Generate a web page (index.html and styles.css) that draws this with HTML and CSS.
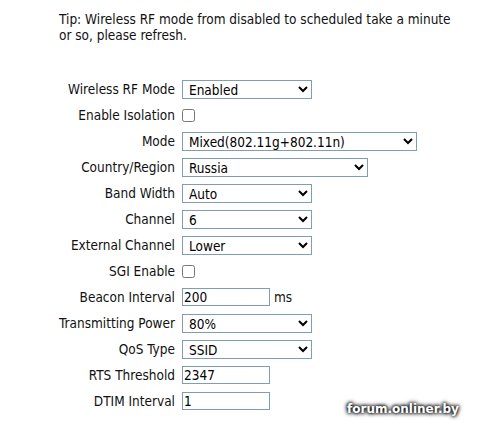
FILE: index.html
```html
<!DOCTYPE html>
<html lang="en">
<head>
    <meta charset="UTF-8">
    <title>Wireless Advanced</title>
    <link rel="stylesheet" href="styles.css">
</head>
<body>
    <p class="tip">Tip: Wireless RF mode from disabled to scheduled take a minute or so, please refresh.</p>

    <form class="settings">
        <label class="lbl">Wireless RF Mode</label>
        <div><select class="sel-sm"><option>Enabled</option><option>Disabled</option><option>Scheduled</option></select></div>

        <label class="lbl">Enable Isolation</label>
        <div><input type="checkbox" class="chk"></div>

        <label class="lbl">Mode</label>
        <div><select class="sel-lg"><option>Mixed(802.11g+802.11n)</option></select></div>

        <label class="lbl">Country/Region</label>
        <div><select class="sel-md"><option>Russia</option></select></div>

        <label class="lbl">Band Width</label>
        <div><select class="sel-sm"><option>Auto</option></select></div>

        <label class="lbl">Channel</label>
        <div><select class="sel-sm"><option>6</option></select></div>

        <label class="lbl">External Channel</label>
        <div><select class="sel-sm"><option>Lower</option></select></div>

        <label class="lbl">SGI Enable</label>
        <div><input type="checkbox" class="chk"></div>

        <label class="lbl">Beacon Interval</label>
        <div><input type="text" class="txt" value="200"> <span class="unit">ms</span></div>

        <label class="lbl">Transmitting Power</label>
        <div><select class="sel-sm"><option>80%</option></select></div>

        <label class="lbl">QoS Type</label>
        <div><select class="sel-sm"><option>SSID</option></select></div>

        <label class="lbl">RTS Threshold</label>
        <div><input type="text" class="txt" value="2347"></div>

        <label class="lbl">DTIM Interval</label>
        <div><input type="text" class="txt" value="1"></div>
    </form>

    <div class="watermark">forum.onliner.by</div>
</body>
</html>
```

FILE: styles.css
```css
body {
    margin: 0;
    background: #fff;
    color: #111;
    font-family: "DejaVu Sans Condensed", "DejaVu Sans", sans-serif;
    font-size: 13.5px;
    position: relative;
    height: 434px;
    overflow: hidden;
}
.tip {
    margin: 0;
    padding: 11px 0 0 59px;
    width: 396px;
    line-height: 16px;
}
.settings {
    display: grid;
    grid-template-columns: 117px auto;
    grid-auto-rows: 26px;
    column-gap: 7px;
    margin-top: 33px;
    padding-left: 58px;
    align-items: center;
}
.lbl {
    text-align: right;
    white-space: nowrap;
}
.settings > div {
    display: flex;
    align-items: center;
}
select, .txt {
    font-family: inherit;
    font-size: 13.5px;
    color: #000;
    border: 1px solid #7f9db9;
    background: #fff;
    margin: 0;
    box-sizing: border-box;
}
select {
    height: 19px;
    padding: 0 0 0 2px;
}
.sel-sm { width: 130px; }
.sel-md { width: 186px; }
.sel-lg { width: 235px; }
.txt {
    width: 88px;
    height: 18px;
    padding: 0 1px;
}
.unit {
    margin-left: 4px;
}
.chk {
    width: 13px;
    height: 13px;
    margin: 0;
}
.watermark {
    position: absolute;
    left: 347px;
    top: 402px;
    color: #fff;
    font-family: "DejaVu Sans", sans-serif;
    font-weight: bold;
    font-size: 12px;
    text-shadow: 0 0 3px #000, 0 0 4px #000, 0 0 5px #333;
}
```
